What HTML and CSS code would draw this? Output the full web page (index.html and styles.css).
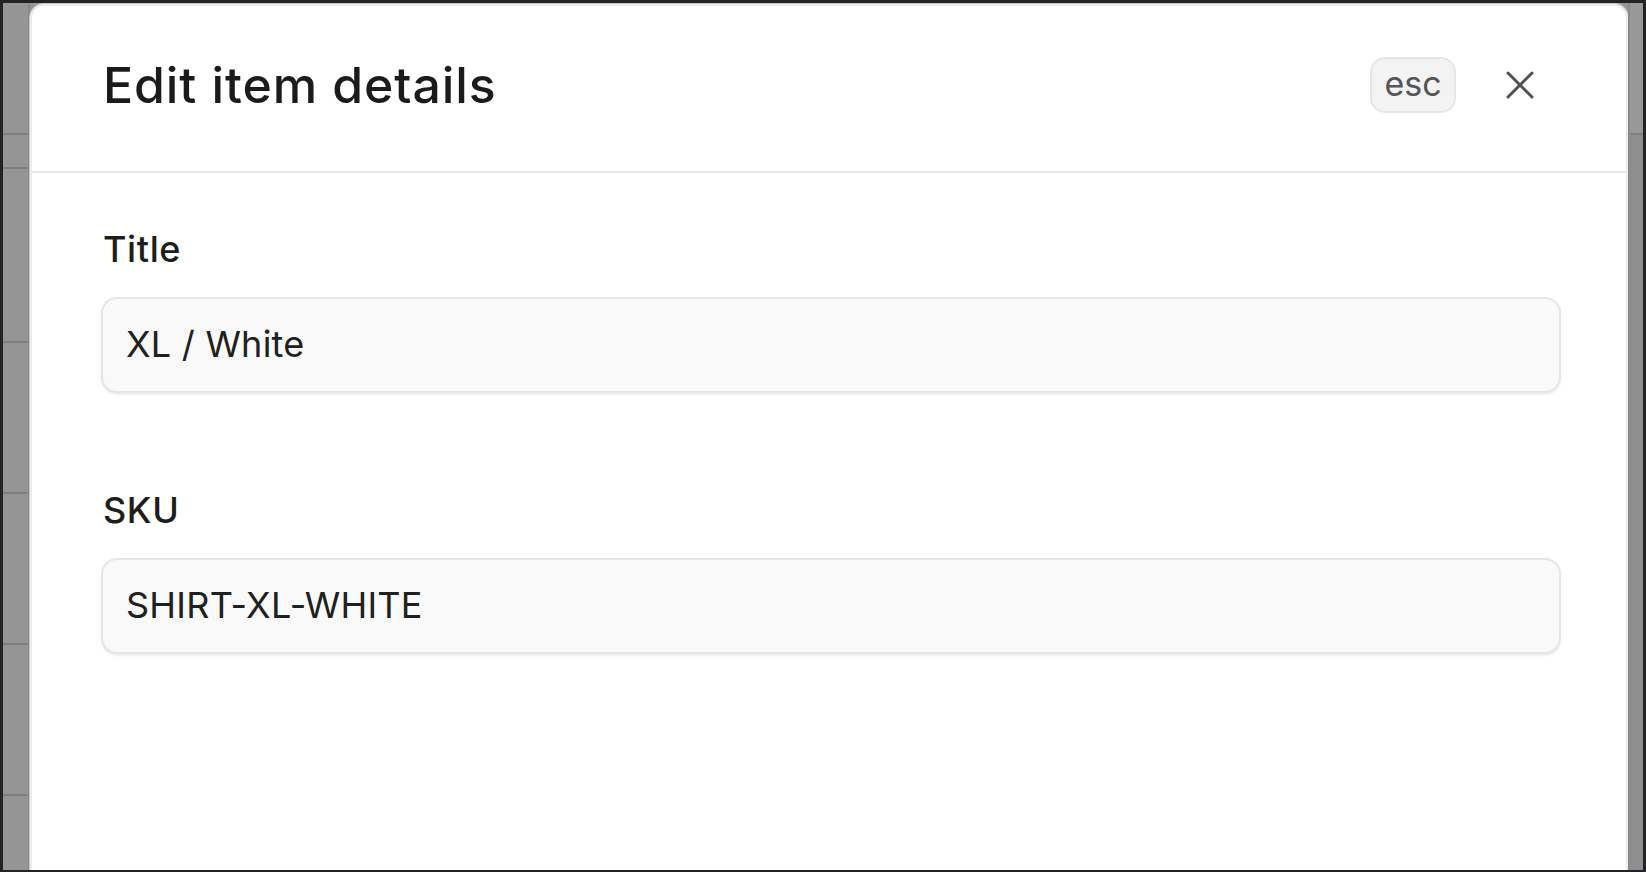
FILE: index.html
```html
<!DOCTYPE html>
<html lang="en">
<head>
<meta charset="utf-8">
<title>Edit item details</title>
<link rel="stylesheet" href="styles.css">
</head>
<body>
<div class="frame">
  <div class="side side-left">
    <div class="row r1"></div>
    <div class="row r2"></div>
    <div class="row r3"></div>
    <div class="row r4"></div>
    <div class="row r4"></div>
    <div class="row r4"></div>
  </div>
  <div class="modal">
    <header class="modal-header">
      <h1 class="modal-title">Edit item details</h1>
      <div class="header-actions">
        <span class="kbd">esc</span>
        <button class="close" aria-label="Close">
          <svg width="28" height="28" viewBox="0 0 28 28" fill="none" stroke="#505050" stroke-width="3" stroke-linecap="round"><path d="M2 2 L26 26 M26 2 L2 26"/></svg>
        </button>
      </div>
    </header>
    <div class="modal-body">
      <label class="field">
        <span class="field-label">Title</span>
        <span class="input">XL / White</span>
      </label>
      <label class="field">
        <span class="field-label">SKU</span>
        <span class="input">SHIRT-XL-WHITE</span>
      </label>
    </div>
  </div>
  <div class="side side-right">
    <div class="row rr1"></div>
  </div>
</div>
</body>
</html>
```
FILE: styles.css
```css
* { box-sizing: border-box; margin: 0; padding: 0; }
html, body { width: 1646px; height: 872px; overflow: hidden; }
body {
  background: #232325;
  padding: 3px 3px 2px 3px;
  font-family: "Inter", "Noto Sans", "Liberation Sans", sans-serif;
  color: #1d1d1d;
}
.frame {
  display: flex;
  height: 867px;
  background: #959595;
  overflow: hidden;
}
.side { display: flex; flex-direction: column; }
.side-left { width: 27px; border-right: 2px solid #8a8a8a; }
.side-right { width: 15px; border-left: 2px solid #8a8a8a; background: #8f8f8f; }
.row { border-bottom: 2px solid #7f7f7f; flex: none; }
.r1 { height: 132px; }
.r2 { height: 34px; }
.r3 { height: 174px; }
.r4 { height: 151px; }
.rr1 { height: 132px; background: #989898; }

.modal {
  width: 1598px;
  margin-top: 1px;
  background: #fff;
  border: 2px solid #ececec;
  border-bottom: none;
  border-radius: 14px 14px 0 0;
  box-shadow: 0 0 0 1px #c9c9c9;
  flex: none;
  display: flex;
  flex-direction: column;
}
.modal-header {
  display: flex;
  align-items: center;
  justify-content: space-between;
  padding: 49px 92px 56px 71px;
  border-bottom: 2px solid #e8e8e8;
}
.modal-title {
  font-size: 50px;
  line-height: 60px;
  font-weight: 500;
  letter-spacing: 0.9px;
  color: #1b1b1b;
}
.header-actions { display: flex; align-items: center; gap: 50px; }
.kbd {
  display: flex;
  align-items: center;
  justify-content: center;
  width: 86px;
  height: 56px;
  border: 2px solid #e6e6e6;
  border-radius: 15px;
  background: #f3f3f3;
  color: #555;
  font-size: 34px;
  padding-bottom: 3px;
}
.close {
  display: flex;
  width: 28px;
  height: 28px;
  border: none;
  background: none;
}
.modal-body {
  padding: 54px 65px 0 69px;
  display: flex;
  flex-direction: column;
  gap: 95px;
}
.field { display: flex; flex-direction: column; gap: 26px; }
.field-label {
  font-size: 36px;
  line-height: 44px;
  font-weight: 500;
  letter-spacing: 0.6px;
  padding-left: 2px;
  color: #1d1d1d;
}
.input {
  display: flex;
  align-items: center;
  height: 96px;
  padding: 0 0 2px 23px;
  background: #f9f9f9;
  border: 2px solid #e5e5e5;
  border-radius: 16px;
  box-shadow: 0 2px 2px rgba(0,0,0,0.07);
  font-size: 36px;
  letter-spacing: 0.25px;
  color: #202020;
}
```
